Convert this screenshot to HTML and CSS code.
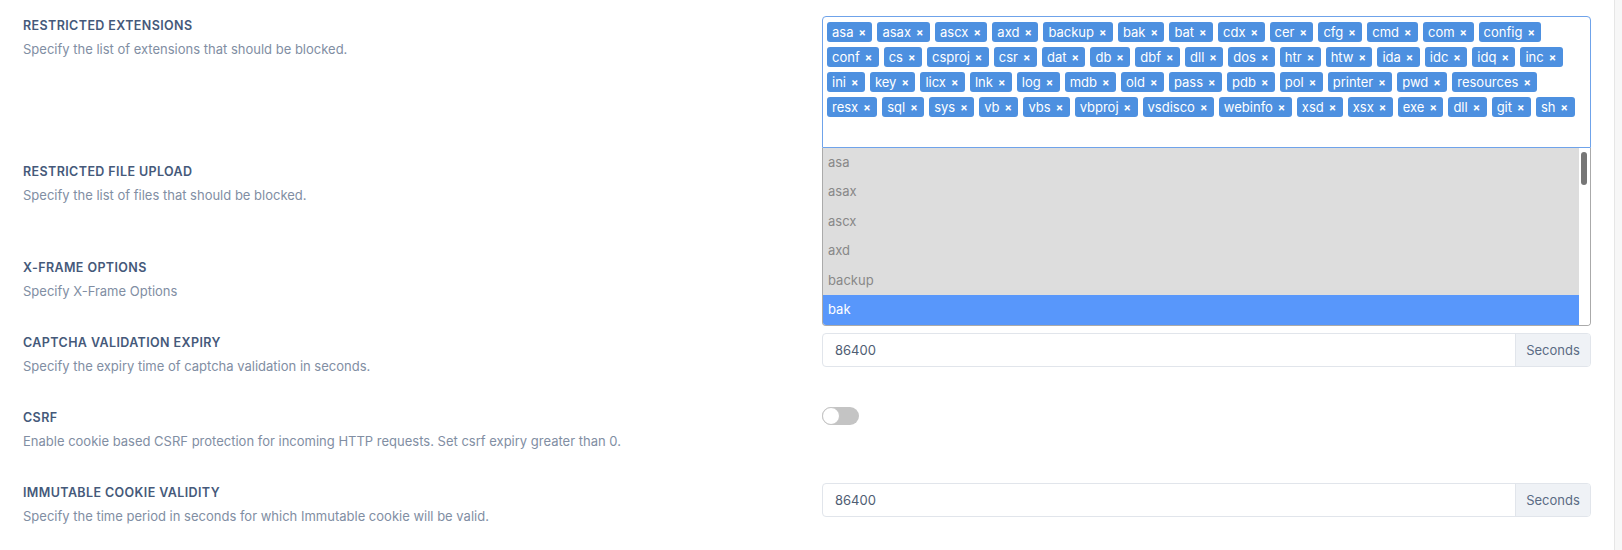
FILE: index.html
```html
<!DOCTYPE html>
<html lang="en">
<head>
<meta charset="utf-8">
<title>Security settings</title>
<link rel="stylesheet" href="styles.css">
</head>
<body>
<div class="page">
  <main class="settings">
    <section class="setting">
      <div class="info">
        <div class="label">RESTRICTED EXTENSIONS</div>
        <div class="desc">Specify the list of extensions that should be blocked.</div>
      </div>
      <div class="control">
        <div class="select-wrap">
          <div class="tagbox focused">
            <div class="tags">
              <div class="tagrow"><span class="tag">asa<b>×</b></span><span class="tag">asax<b>×</b></span><span class="tag">ascx<b>×</b></span><span class="tag">axd<b>×</b></span><span class="tag">backup<b>×</b></span><span class="tag">bak<b>×</b></span><span class="tag">bat<b>×</b></span><span class="tag">cdx<b>×</b></span><span class="tag">cer<b>×</b></span><span class="tag">cfg<b>×</b></span><span class="tag">cmd<b>×</b></span><span class="tag">com<b>×</b></span><span class="tag">config<b>×</b></span></div>
              <div class="tagrow"><span class="tag">conf<b>×</b></span><span class="tag">cs<b>×</b></span><span class="tag">csproj<b>×</b></span><span class="tag">csr<b>×</b></span><span class="tag">dat<b>×</b></span><span class="tag">db<b>×</b></span><span class="tag">dbf<b>×</b></span><span class="tag">dll<b>×</b></span><span class="tag">dos<b>×</b></span><span class="tag">htr<b>×</b></span><span class="tag">htw<b>×</b></span><span class="tag">ida<b>×</b></span><span class="tag">idc<b>×</b></span><span class="tag">idq<b>×</b></span><span class="tag">inc<b>×</b></span></div>
              <div class="tagrow"><span class="tag">ini<b>×</b></span><span class="tag">key<b>×</b></span><span class="tag">licx<b>×</b></span><span class="tag">lnk<b>×</b></span><span class="tag">log<b>×</b></span><span class="tag">mdb<b>×</b></span><span class="tag">old<b>×</b></span><span class="tag">pass<b>×</b></span><span class="tag">pdb<b>×</b></span><span class="tag">pol<b>×</b></span><span class="tag">printer<b>×</b></span><span class="tag">pwd<b>×</b></span><span class="tag">resources<b>×</b></span></div>
              <div class="tagrow"><span class="tag">resx<b>×</b></span><span class="tag">sql<b>×</b></span><span class="tag">sys<b>×</b></span><span class="tag">vb<b>×</b></span><span class="tag">vbs<b>×</b></span><span class="tag">vbproj<b>×</b></span><span class="tag">vsdisco<b>×</b></span><span class="tag">webinfo<b>×</b></span><span class="tag">xsd<b>×</b></span><span class="tag">xsx<b>×</b></span><span class="tag">exe<b>×</b></span><span class="tag">dll<b>×</b></span><span class="tag">git<b>×</b></span><span class="tag">sh<b>×</b></span></div>
              <div class="search"></div>
            </div>
          </div>
          <div class="dropdown">
            <ul class="options">
              <li>asa</li>
              <li>asax</li>
              <li>ascx</li>
              <li>axd</li>
              <li>backup</li>
              <li class="hl">bak</li>
            </ul>
            <div class="vscroll"><div class="thumb"></div></div>
          </div>
        </div>
      </div>
    </section>

    <section class="setting">
      <div class="info">
        <div class="label">RESTRICTED FILE UPLOAD</div>
        <div class="desc">Specify the list of files that should be blocked.</div>
      </div>
      <div class="control">
        <div class="tagbox hidden-box"></div>
      </div>
    </section>

    <section class="setting">
      <div class="info">
        <div class="label">X-FRAME OPTIONS</div>
        <div class="desc">Specify X-Frame Options</div>
      </div>
      <div class="control">
        <div class="field"></div>
      </div>
    </section>

    <section class="setting">
      <div class="info">
        <div class="label">CAPTCHA VALIDATION EXPIRY</div>
        <div class="desc">Specify the expiry time of captcha validation in seconds.</div>
      </div>
      <div class="control">
        <div class="input-group">
          <div class="input">86400</div>
          <div class="addon">Seconds</div>
        </div>
      </div>
    </section>

    <section class="setting">
      <div class="info">
        <div class="label">CSRF</div>
        <div class="desc">Enable cookie based CSRF protection for incoming HTTP requests. Set csrf expiry greater than 0.</div>
      </div>
      <div class="control">
        <div class="toggle"><span class="knob"></span></div>
      </div>
    </section>

    <section class="setting">
      <div class="info">
        <div class="label">IMMUTABLE COOKIE VALIDITY</div>
        <div class="desc">Specify the time period in seconds for which Immutable cookie will be valid.</div>
      </div>
      <div class="control">
        <div class="input-group">
          <div class="input">86400</div>
          <div class="addon">Seconds</div>
        </div>
      </div>
    </section>
  </main>
  <div class="gutter"></div>
</div>
</body>
</html>
```

FILE: styles.css
```css
* { box-sizing: border-box; }
html, body { margin: 0; padding: 0; }
body {
  background: #fff;
  font-family: Inter, "Noto Sans", "Liberation Sans", sans-serif;
  color: #3d5170;
  height: 550px;
  overflow: hidden;
}
.page {
  display: flex;
  height: 550px;
}
.settings {
  flex: 1;
  padding: 15.7px 23px 0 23px;
}
.gutter {
  width: 8px;
  background: #f7f7f7;
  border-left: 1px solid #e6e6e6;
}
.setting {
  display: grid;
  grid-template-columns: 1fr 1fr;
  column-gap: 30px;
  align-items: start;
}
.info {
  margin-bottom: 32px;
}
.label {
  font-size: 12.5px;
  font-weight: 600;
  line-height: 19px;
  color: #45597a;
  letter-spacing: 0.4px;
}
.desc {
  margin-top: 4px;
  font-size: 13px;
  line-height: 20px;
  color: #818ea3;
}
.control {
  margin-bottom: 14px;
}
.select-wrap {
  position: relative;
}
.tagbox {
  border: 1px solid #e1e5eb;
  border-radius: 4px;
  background: #fff;
  padding: 5px 0 0 4px;
}
.tagbox.focused {
  border-color: #6fa3ea;
  border-radius: 4px 4px 0 0;
}
.hidden-box { height: 82px; }
.tags {
  display: flex;
  flex-direction: column;
}
.tagrow {
  display: flex;
  flex-wrap: nowrap;
}
.tag {
  display: inline-flex;
  align-items: center;
  height: 20px;
  margin: 0 5px 5px 0;
  padding: 0 6.5px 0 5px;
  background: #4d90e0;
  border-radius: 3px;
  color: #fff;
  font-size: 13px;
  line-height: 20px;
  white-space: nowrap;
}
.tag b {
  margin-left: 5px;
  font-size: 11px;
  font-weight: 700;
}
.search {
  height: 20px;
  margin-bottom: 5px;
}
.dropdown {
  position: absolute;
  top: 100%;
  left: 0;
  right: 0;
  z-index: 5;
  display: flex;
  background: #fff;
  border: 1px solid #aaa;
  border-top: none;
  border-radius: 0 0 4px 4px;
  overflow: hidden;
}
.options {
  flex: 1;
  list-style: none;
  margin: 0;
  padding: 0;
  background: #ddd;
}
.options li {
  height: 29.5px;
  line-height: 29.5px;
  padding-left: 5px;
  font-size: 13px;
  color: #888;
}
.options li.hl {
  background: #5897fb;
  color: #fff;
}
.vscroll {
  width: 11px;
  background: #fff;
  padding: 4px 3px 0 2px;
}
.thumb {
  width: 6px;
  height: 33px;
  border-radius: 3px;
  background: #767676;
}
.field {
  height: 34px;
  border: 1px solid #e1e5eb;
  border-radius: 4px;
}
.input-group {
  display: flex;
  height: 34px;
  border: 1px solid #e1e5eb;
  border-radius: 4px;
  overflow: hidden;
}
.input {
  flex: 1;
  padding: 0 12px;
  font-size: 13px;
  line-height: 32px;
  color: #4f5d73;
}
.addon {
  width: 75px;
  border-left: 1px solid #e1e5eb;
  background: #eff2f6;
  font-size: 13px;
  line-height: 32px;
  text-align: center;
  color: #5a6b84;
}
.toggle {
  width: 37px;
  height: 18px;
  margin-top: -1px;
  border-radius: 9px;
  background: #c4c4c4;
  position: relative;
}
.knob {
  position: absolute;
  left: 0;
  top: 0;
  width: 18px;
  height: 18px;
  border-radius: 50%;
  background: #fff;
  border: 1px solid #c4c4c4;
}
```
